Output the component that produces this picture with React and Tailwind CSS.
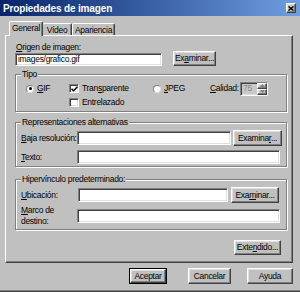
import React from 'react';

const raised =
  'border border-t-white border-l-white border-r-[#404040] border-b-[#404040] shadow-[inset_-1px_-1px_#808080,inset_1px_1px_#dfdfdf]';
const sunken =
  'border border-t-[#808080] border-l-[#808080] border-r-white border-b-white shadow-[inset_1px_1px_#404040,inset_-1px_-1px_#dfdfdf]';

const Btn = ({ className = '', children }) => (
  <div className={`flex items-center justify-center bg-[#c0c0c0] whitespace-nowrap ${raised} ${className}`}>
    {children}
  </div>
);

const Field = ({ className = '', children }) => (
  <div className={`flex items-center bg-white pl-[2px] whitespace-nowrap overflow-hidden ${sunken} ${className}`}>
    {children}
  </div>
);

const Radio = ({ on }) => (
  <div className="w-[8px] h-[8px] rounded-full bg-white border border-t-[#808080] border-l-[#808080] border-r-[#dfdfdf] border-b-[#dfdfdf] flex items-center justify-center shrink-0">
    {on && <div className="w-[3px] h-[3px] rounded-full bg-black" />}
  </div>
);

const Check = ({ on }) => (
  <div className={`w-[10px] h-[9px] bg-white shrink-0 flex items-center justify-center ${sunken}`}>
    {on && (
      <svg width="7" height="6" viewBox="0 0 7 6">
        <path d="M0.5 2.8 L2.6 4.8 L6.5 0.8" fill="none" stroke="#000" strokeWidth="1.5" />
      </svg>
    )}
  </div>
);

const Group = ({ title, className = '', children }) => (
  <fieldset className={`w-[272px] border border-[#808080] shadow-[1px_1px_0_white,inset_1px_1px_0_white] ${className}`}>
    <legend className="ml-[5px] px-[1px] h-[11px] leading-[11px] bg-[#c0c0c0]">{title}</legend>
    {children}
  </fieldset>
);

const Spinner = () => (
  <div className={`flex w-[28px] h-[14px] bg-[#c8c8c8] ${sunken}`}>
    <div className="flex-1 flex items-center pl-[2px] text-[#8a8a8a]">75</div>
    <div className="w-[10px] flex flex-col">
      <div className={`flex-1 flex items-center justify-center bg-[#c0c0c0] ${raised}`}>
        <svg width="5" height="3" viewBox="0 0 5 3"><path d="M0 3 L2.5 0 L5 3 Z" fill="#808080" /></svg>
      </div>
      <div className={`flex-1 flex items-center justify-center bg-[#c0c0c0] ${raised}`}>
        <svg width="5" height="3" viewBox="0 0 5 3"><path d="M0 0 L2.5 3 L5 0 Z" fill="#808080" /></svg>
      </div>
    </div>
  </div>
);

export default function App() {
  return (
    <div className="w-[300px] h-[292px] bg-[#c0c0c0] flex flex-col overflow-hidden text-black text-[8.5px] leading-[11px] tracking-[-0.3px] font-['Liberation_Sans',Arial,sans-serif] shadow-[inset_0_-1px_#404040,inset_0_-2px_#808080]">
      {/* Title bar */}
      <div className="h-[16px] shrink-0 flex items-center justify-between pl-[3px] pr-[4px] bg-gradient-to-r from-[#0a246a] to-[#6f9fe0]">
        <span className="text-white font-bold text-[10px] tracking-[-0.15px]">Propiedades de imagen</span>
        <div className={`w-[10px] h-[10px] flex items-center justify-center bg-[#c0c0c0] ${raised}`}>
          <svg width="6" height="5" viewBox="0 0 6 5">
            <path d="M0.5 0.5 L5.5 4.5 M5.5 0.5 L0.5 4.5" stroke="#000" strokeWidth="1.4" />
          </svg>
        </div>
      </div>

      {/* Tabs */}
      <div className="mt-[5px] h-[15px] shrink-0 flex items-end pl-[9px]">
        <div className="relative z-10 w-[34px] h-[15px] bg-[#c0c0c0] border-t border-l border-t-white border-l-white border-r border-r-[#404040] shadow-[inset_-1px_0_#808080] rounded-t-[2px] flex items-center justify-center pb-[1px]">
          General
        </div>
        <div className="w-[29px] h-[13px] bg-[#c0c0c0] border-t border-t-white border-r border-r-[#404040] shadow-[inset_-1px_0_#808080] rounded-t-[2px] flex items-center justify-center">
          Vídeo
        </div>
        <div className="w-[43px] h-[13px] bg-[#c0c0c0] border-t border-t-white border-l border-l-white border-r border-r-[#404040] shadow-[inset_-1px_0_#808080] rounded-t-[2px] flex items-center justify-center">
          Apariencia
        </div>
      </div>

      {/* Panel */}
      <div className="-mt-[1px] ml-[5px] w-[288px] h-[228px] shrink-0 flex flex-col pl-[9px] border border-t-white border-l-white border-r-[#404040] border-b-[#404040] shadow-[inset_-1px_-1px_#808080]">
        <div className="mt-[6px] h-[11px] pl-px">
          <u>O</u>rigen de imagen:
        </div>
        <div className="-mt-[2px] h-[15px] flex items-end">
          <Field className="w-[147px] h-[13px]">images/grafico.gif</Field>
          <Btn className="ml-[11px] w-[43px] h-[15px]">
            <span>
              Ex<u>a</u>minar...
            </span>
          </Btn>
        </div>

        <Group title="Tipo" className="mt-[3px] pb-[2px]">
          <div className="mt-[2px] h-[13px] flex items-center">
            <div className="w-[53px] pl-[10px] flex items-center">
              <Radio on />
              <span className="ml-[3px]">
                <u>G</u>IF
              </span>
            </div>
            <div className="w-[84px] flex items-center">
              <Check on />
              <span className="ml-[3px]">
                Tran<u>s</u>parente
              </span>
            </div>
            <div className="w-[57px] flex items-center">
              <Radio />
              <span className="ml-[3px]">
                <u>J</u>PEG
              </span>
            </div>
            <span className="w-[30px] whitespace-nowrap">
              <u>C</u>alidad:
            </span>
            <Spinner />
          </div>
          <div className="h-[14px] flex items-center pl-[53px]">
            <Check />
            <span className="ml-[3px]">Entrelazado</span>
          </div>
        </Group>

        <Group title="Representaciones alternativas" className="mt-[5px] pb-[2px]">
          <div className="mt-[2px] h-[16px] flex items-center">
            <span className="w-[61px] pl-[5px] whitespace-nowrap">
              <u>B</u>aja resolución:
            </span>
            <Field className="w-[154px] h-[14px]" />
            <Btn className="ml-[2px] w-[49px] h-[16px]">
              <span>
                Examina<u>r</u>...
              </span>
            </Btn>
          </div>
          <div className="mt-[4px] h-[14px] flex items-center">
            <span className="w-[61px] pl-[5px]">
              <u>T</u>exto:
            </span>
            <Field className="w-[203px] h-[14px]" />
          </div>
        </Group>

        <Group title="Hipervínculo predeterminado:" className="mt-[7px] pb-[2px]">
          <div className="mt-[2px] h-[16px] flex items-center">
            <span className="w-[62px] pl-[5px]">
              <u>U</u>bicación:
            </span>
            <Field className="w-[150px] h-[14px]" />
            <Btn className="ml-[3px] w-[48px] h-[16px]">
              <span>
                Exa<u>m</u>inar...
              </span>
            </Btn>
          </div>
          <div className="mt-[2px] flex items-start">
            <span className="w-[61px] pl-[5px] leading-[11px]">
              <u>M</u>arco de
              <br />
              destino:
            </span>
            <Field className="mt-[4px] w-[203px] h-[14px]" />
          </div>
        </Group>

        <div className="mt-[10px] flex justify-end pr-[11px]">
          <Btn className="w-[47px] h-[15px]">
            <span>
              Exte<u>n</u>dido...
            </span>
          </Btn>
        </div>
      </div>

      {/* Dialog buttons */}
      <div className="mt-[5px] h-[16px] shrink-0 flex pl-[129px]">
        <div className="w-[38px] h-[16px] border border-black flex">
          <Btn className="flex-1">Aceptar</Btn>
        </div>
        <Btn className="ml-[21px] w-[43px] h-[16px]">Cancelar</Btn>
        <Btn className="ml-[16px] w-[46px] h-[16px]">Ayuda</Btn>
      </div>
    </div>
  );
}
